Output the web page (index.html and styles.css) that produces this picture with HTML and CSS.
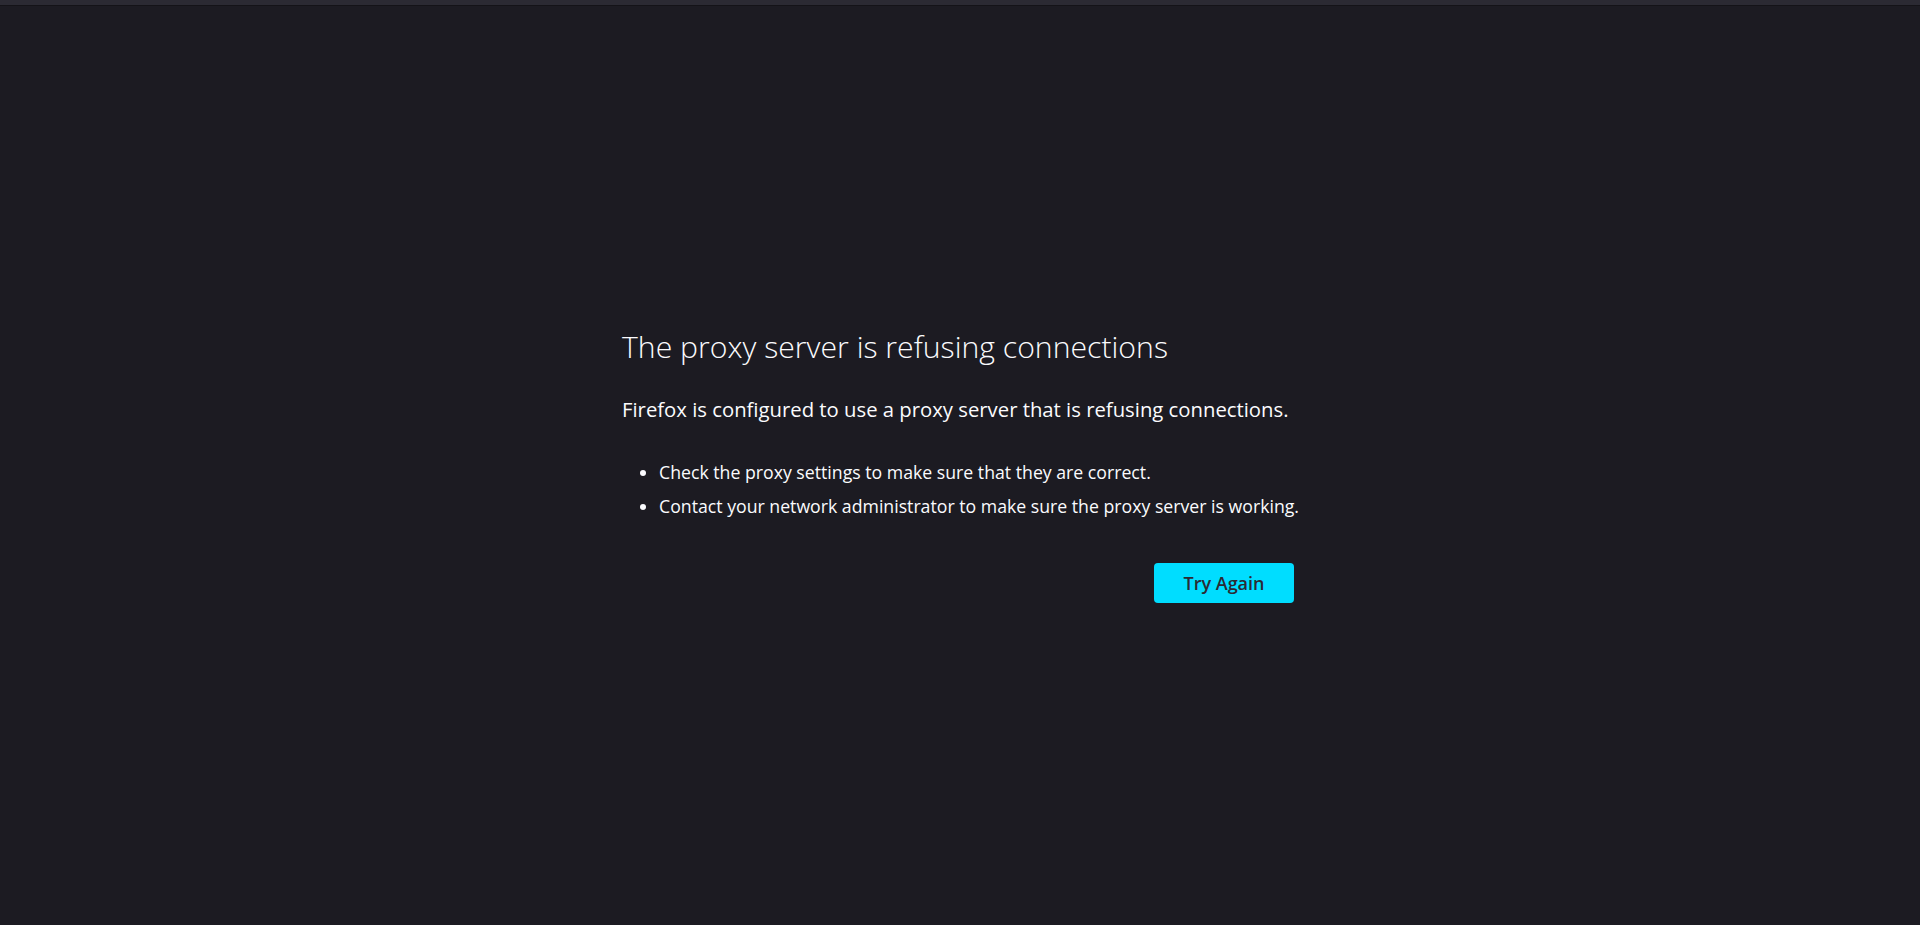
FILE: index.html
```html
<!DOCTYPE html>
<html lang="en">
<head>
<meta charset="utf-8">
<title>Problem loading page</title>
<link rel="stylesheet" href="styles.css">
</head>
<body>
<div class="topbar"></div>
<main class="page">
  <div class="container">
    <h1 class="title">The proxy server is refusing connections</h1>
    <p class="intro">Firefox is configured to use a proxy server that is refusing connections.</p>
    <ul class="tips">
      <li>Check the proxy settings to make sure that they are correct.</li>
      <li>Contact your network administrator to make sure the proxy server is working.</li>
    </ul>
    <div class="actions">
      <button class="btn-primary" type="button">Try Again</button>
    </div>
  </div>
</main>
</body>
</html>
```
FILE: styles.css
```css
html, body {
  margin: 0;
  padding: 0;
  height: 100%;
}
body {
  background: #1c1b22;
  color: #fbfbfe;
  font-family: "Open Sans", "Noto Sans", sans-serif;
  display: flex;
  flex-direction: column;
}
.topbar {
  height: 5px;
  background: #2b2a33;
  border-bottom: 1px solid #141318;
  flex: none;
}
.page {
  flex: 1;
  display: flex;
  align-items: center;
  justify-content: center;
  padding-bottom: 1px;
  padding-right: 4px;
}
.container {
  width: 672px;
}
.title {
  font-weight: 300;
  font-size: 30.2px;
  line-height: 40px;
  margin: 0 0 28px;
  white-space: nowrap;
}
.intro {
  font-size: 20.3px;
  line-height: 28px;
  margin: 0 0 32px;
  white-space: nowrap;
}
.tips {
  margin: 0;
  padding-left: 37px;
  font-size: 17.7px;
  line-height: 34px;
}
.tips li {
  white-space: nowrap;
}
.actions {
  display: flex;
  justify-content: flex-end;
  margin-top: 40px;
}
.btn-primary {
  background: #00ddff;
  color: #2b2a33;
  border: none;
  border-radius: 4px;
  width: 140px;
  height: 40px;
  font-family: inherit;
  font-size: 18px;
  font-weight: 600;
}
```
